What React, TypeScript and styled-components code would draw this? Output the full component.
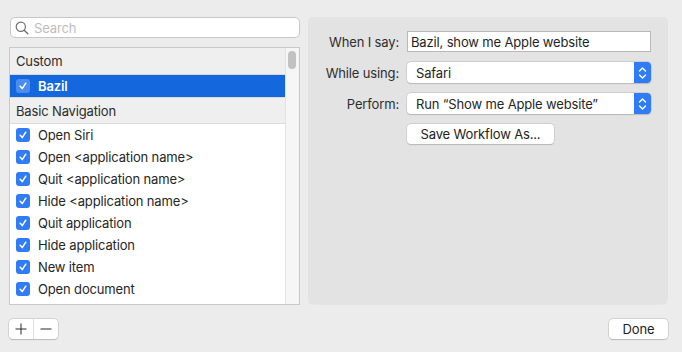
import styled, { createGlobalStyle } from "styled-components";

const GlobalStyle = createGlobalStyle`
  html, body {
    margin: 0;
    padding: 0;
    background: #ececec;
  }
  * {
    box-sizing: border-box;
  }
`;

const customItems = ["Bazil"];
const navItems = [
  "Open Siri",
  "Open <application name>",
  "Quit <application name>",
  "Hide <application name>",
  "Quit application",
  "Hide application",
  "New item",
  "Open document",
];

const Window = styled.div`
  width: 682px;
  height: 352px;
  padding: 17px 14px 0 9px;
  display: flex;
  flex-direction: column;
  gap: 14px;
  background: #ececec;
  font-family: Inter, "Liberation Sans", sans-serif;
  font-size: 13px;
  letter-spacing: -0.15px;
  color: #262626;
`;

const Main = styled.div`
  display: flex;
  gap: 8px;
  height: 288px;
`;

const LeftColumn = styled.div`
  width: 291px;
  display: flex;
  flex-direction: column;
  gap: 9px;
`;

const SearchField = styled.div`
  height: 21px;
  margin-left: 1px;
  border: 1px solid #c6c6c6;
  border-radius: 5px;
  background: #fff;
  display: flex;
  align-items: center;
  gap: 5px;
  padding-left: 4px;
  color: #bdbdbd;
`;

const ListBox = styled.div`
  flex: 1;
  border: 1px solid #c9c9c9;
  background: #fff;
  display: flex;
  overflow: hidden;
`;

const Rows = styled.div`
  flex: 1;
  display: flex;
  flex-direction: column;
`;

const GroupHeader = styled.div<{ $first?: boolean }>`
  height: 27px;
  display: flex;
  align-items: center;
  padding-left: 6px;
  background: #efefef;
  border-top: ${(p) => (p.$first ? "none" : "1px solid #dadada")};
  border-bottom: 1px solid #dadada;
  color: #2b2b2b;
`;

const Row = styled.div<{ $selected?: boolean }>`
  height: 22px;
  display: flex;
  align-items: center;
  gap: 8px;
  padding-left: 6px;
  background: ${(p) => (p.$selected ? "#1467dc" : "transparent")};
  color: ${(p) => (p.$selected ? "#fff" : "#262626")};
  font-weight: ${(p) => (p.$selected ? 600 : 400)};
`;

const Check = styled.span<{ $light?: boolean }>`
  width: 14px;
  height: 14px;
  border-radius: 3px;
  background: ${(p) => (p.$light ? "#4a8cf0" : "#2f7cf6")};
  display: flex;
  align-items: center;
  justify-content: center;
  flex-shrink: 0;
`;

const Scrollbar = styled.div`
  width: 14px;
  border-left: 1px solid #e2e2e2;
  background: #f6f6f6;
  padding: 3px 0 0 2px;
`;

const Thumb = styled.div`
  width: 8px;
  height: 18px;
  border-radius: 4px;
  background: #c2c2c2;
`;

const Panel = styled.div`
  width: 360px;
  background: #e3e3e3;
  border-radius: 5px;
  padding: 14px 0 0 14px;
`;

const Form = styled.div`
  display: grid;
  grid-template-columns: 77px 244px;
  column-gap: 8px;
  row-gap: 10px;
  align-items: center;
`;

const Label = styled.div`
  text-align: right;
  color: #2e2e2e;
`;

const TextInput = styled.div`
  height: 21px;
  border: 1px solid #b8b8b8;
  background: #fff;
  display: flex;
  align-items: center;
  padding-left: 3px;
  color: #1f1f1f;
`;

const Select = styled.div`
  height: 21px;
  border-radius: 4px;
  background: #fff;
  box-shadow: 0 0 0 0.5px #bdbdbd, 0 0.5px 1px rgba(0, 0, 0, 0.2);
  display: flex;
  align-items: center;
  justify-content: space-between;
  padding-left: 9px;
  overflow: hidden;
`;

const Stepper = styled.div`
  width: 17px;
  height: 100%;
  background: #2f7cf6;
  display: flex;
  align-items: center;
  justify-content: center;
`;

const Button = styled.div<{ $width: number }>`
  width: ${(p) => p.$width}px;
  height: 20px;
  border-radius: 4px;
  background: #fff;
  box-shadow: 0 0 0 0.5px #bdbdbd, 0 0.5px 1px rgba(0, 0, 0, 0.2);
  display: flex;
  align-items: center;
  justify-content: center;
  color: #222;
`;

const BottomBar = styled.div`
  display: flex;
  justify-content: space-between;
  align-items: center;
  height: 20px;
`;

const Segmented = styled.div`
  width: 49px;
  height: 20px;
  display: flex;
  border-radius: 4px;
  background: #fff;
  box-shadow: 0 0 0 0.5px #bdbdbd, 0 0.5px 1px rgba(0, 0, 0, 0.2);
`;

const Segment = styled.div<{ $divider?: boolean }>`
  flex: 1;
  display: flex;
  align-items: center;
  justify-content: center;
  border-left: ${(p) => (p.$divider ? "1px solid #dcdcdc" : "none")};
`;

const CheckIcon = () => (
  <svg width="10" height="10" viewBox="0 0 10 10">
    <path d="M2.2 5.2 L4.2 7.6 L7.8 2.2" fill="none" stroke="#fff" strokeWidth="1.5" strokeLinecap="round" strokeLinejoin="round" />
  </svg>
);

const SearchIcon = () => (
  <svg width="14" height="14" viewBox="0 0 14 14">
    <circle cx="5.8" cy="5.8" r="4.6" fill="none" stroke="#6e6e6e" strokeWidth="1.2" />
    <path d="M9.2 9.2 L12.8 12.8" stroke="#6e6e6e" strokeWidth="1.3" strokeLinecap="round" />
  </svg>
);

const StepperIcon = () => (
  <svg width="9" height="14" viewBox="0 0 9 14">
    <path d="M1.5 5 L4.5 2 L7.5 5" fill="none" stroke="#fff" strokeWidth="1.4" strokeLinecap="round" strokeLinejoin="round" />
    <path d="M1.5 9 L4.5 12 L7.5 9" fill="none" stroke="#fff" strokeWidth="1.4" strokeLinecap="round" strokeLinejoin="round" />
  </svg>
);

const PlusIcon = () => (
  <svg width="12" height="12" viewBox="0 0 12 12">
    <path d="M6 0.5 V11.5 M0.5 6 H11.5" stroke="#2a2a2a" strokeWidth="1" />
  </svg>
);

const MinusIcon = () => (
  <svg width="12" height="12" viewBox="0 0 12 12">
    <path d="M0.5 6 H11.5" stroke="#2a2a2a" strokeWidth="1" />
  </svg>
);

export default function App() {
  return (
    <>
      <GlobalStyle />
      <Window>
        <Main>
          <LeftColumn>
            <SearchField>
              <SearchIcon />
              Search
            </SearchField>
            <ListBox>
              <Rows>
                <GroupHeader $first>Custom</GroupHeader>
                {customItems.map((item) => (
                  <Row key={item} $selected>
                    <Check $light>
                      <CheckIcon />
                    </Check>
                    {item}
                  </Row>
                ))}
                <GroupHeader>Basic Navigation</GroupHeader>
                {navItems.map((item) => (
                  <Row key={item}>
                    <Check>
                      <CheckIcon />
                    </Check>
                    {item}
                  </Row>
                ))}
              </Rows>
              <Scrollbar>
                <Thumb />
              </Scrollbar>
            </ListBox>
          </LeftColumn>
          <Panel>
            <Form>
              <Label>When I say:</Label>
              <TextInput>Bazil, show me Apple website</TextInput>
              <Label>While using:</Label>
              <Select>
                Safari
                <Stepper>
                  <StepperIcon />
                </Stepper>
              </Select>
              <Label>Perform:</Label>
              <Select>
                Run “Show me Apple website”
                <Stepper>
                  <StepperIcon />
                </Stepper>
              </Select>
              <div />
              <Button $width={147}>Save Workflow As...</Button>
            </Form>
          </Panel>
        </Main>
        <BottomBar>
          <Segmented>
            <Segment>
              <PlusIcon />
            </Segment>
            <Segment $divider>
              <MinusIcon />
            </Segment>
          </Segmented>
          <Button $width={59}>Done</Button>
        </BottomBar>
      </Window>
    </>
  );
}
